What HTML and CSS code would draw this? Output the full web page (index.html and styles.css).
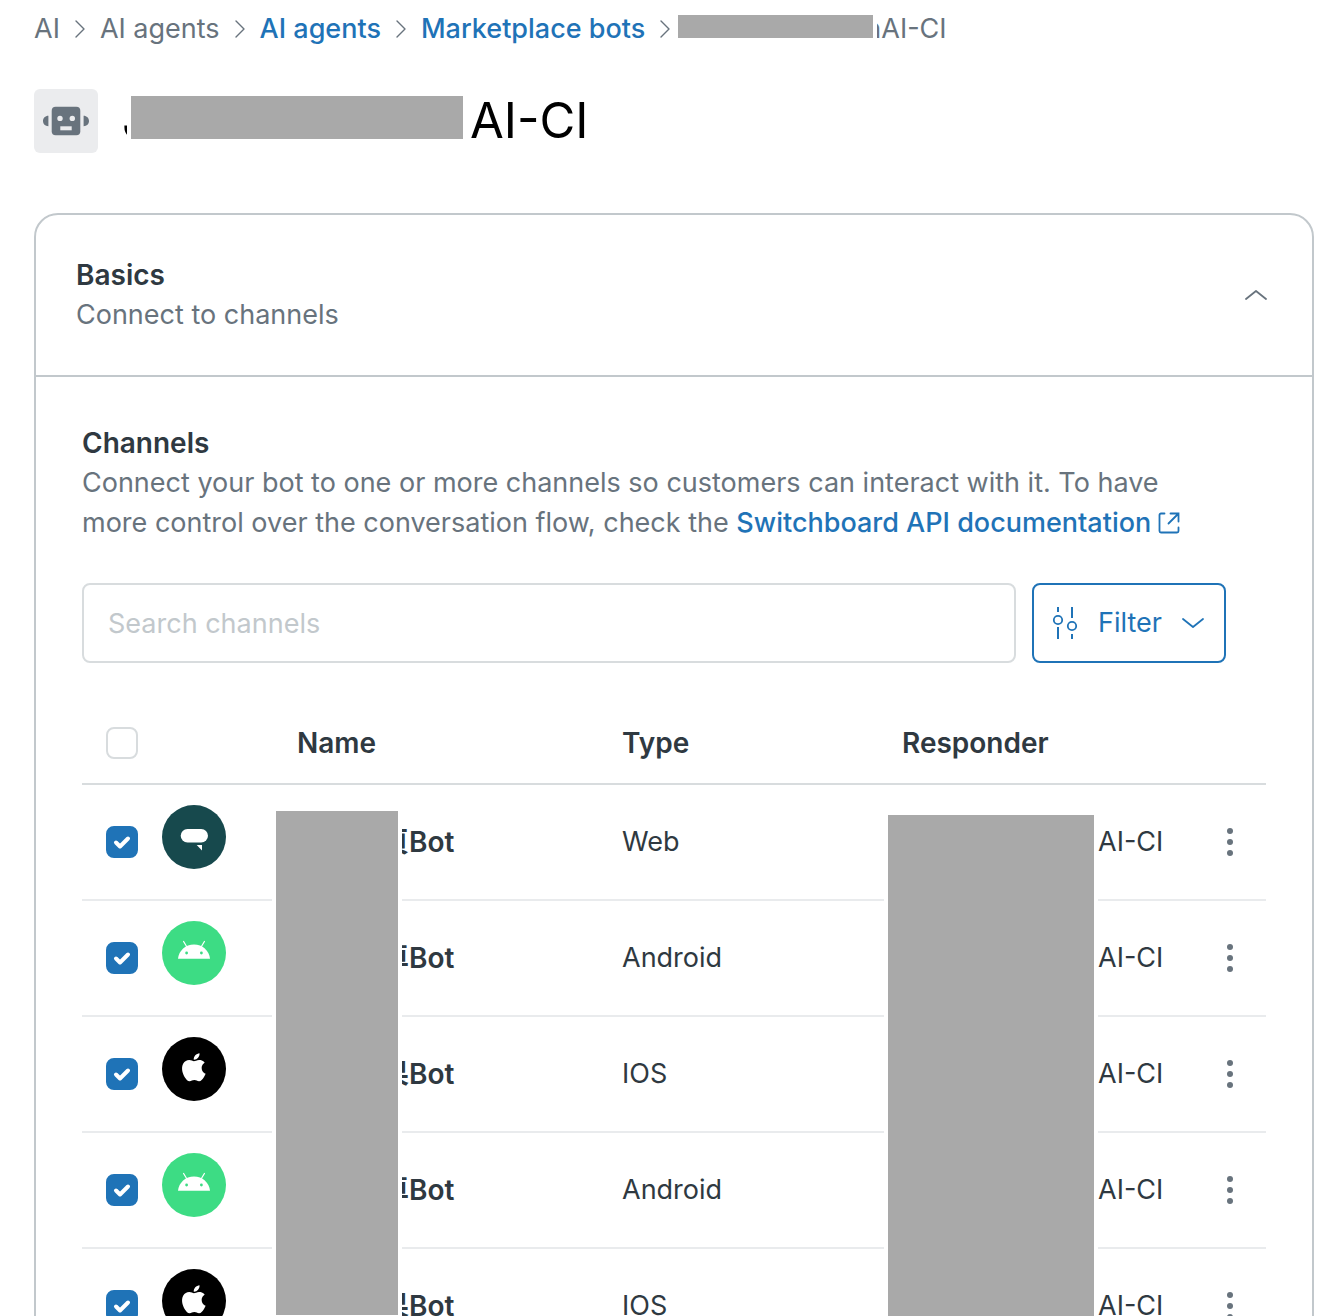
FILE: index.html
```html
<!DOCTYPE html>
<html lang="en">
<head>
  <meta charset="UTF-8" />
  <meta name="viewport" content="width=device-width, initial-scale=1.0"/>
  <title>AI-CI</title>
  <link rel="stylesheet" href="styles.css">
</head>
<body>

  <!-- Shared icons -->
  <svg class="sprite" aria-hidden="true">
    <symbol id="chevron" viewBox="0 0 10 18">
      <path d="M1 1l8 8-8 8" fill="none" stroke="currentColor" stroke-width="1.4" stroke-linecap="round" stroke-linejoin="round"/>
    </symbol>
    <symbol id="web" viewBox="0 0 64 64">
      <circle cx="32" cy="32" r="32" fill="#17494d"/>
      <rect x="18.7" y="24" width="27.3" height="13.6" rx="6.8" fill="#fff"/>
      <path d="M34.7 40H40v5.4z" fill="#fff"/>
    </symbol>
    <symbol id="android" viewBox="0 0 64 64">
      <circle cx="32" cy="32" r="32" fill="#3ddc84"/>
      <path d="M16 37.8c.8-8.2 7.6-14.3 16-14.3s15.2 6.1 16 14.3z" fill="#fff"/>
      <path d="M21.6 20.5l3 5M42.4 20.5l-3 5" stroke="#fff" stroke-width="1.2" stroke-linecap="round"/>
      <circle cx="24.6" cy="32" r="1.4" fill="#3ddc84"/>
      <circle cx="39.4" cy="32" r="1.4" fill="#3ddc84"/>
    </symbol>
    <symbol id="apple" viewBox="0 0 64 64">
      <circle cx="32" cy="32" r="32" fill="#000"/>
      <path transform="translate(17.4 16.2) scale(1.2 1.17)" fill="#fff" d="M12.152 6.896c-.948 0-2.415-1.078-3.96-1.04-2.04.027-3.91 1.183-4.961 3.014-2.117 3.675-.546 9.103 1.519 12.09 1.013 1.454 2.208 3.09 3.792 3.039 1.52-.065 2.09-.987 3.935-.987 1.831 0 2.35.987 3.96.948 1.637-.026 2.676-1.48 3.676-2.948 1.156-1.688 1.636-3.325 1.662-3.415-.039-.013-3.182-1.221-3.22-4.857-.026-3.04 2.48-4.494 2.597-4.559-1.429-2.09-3.623-2.324-4.39-2.376-2-.156-3.675 1.09-4.61 1.09zM15.53 3.83c.843-1.012 1.4-2.427 1.245-3.83-1.207.052-2.662.805-3.532 1.818-.78.896-1.454 2.338-1.273 3.714 1.338.104 2.715-.688 3.559-1.701"/>
    </symbol>
    <symbol id="dots" viewBox="0 0 6 28">
      <circle cx="3" cy="3" r="3"/>
      <circle cx="3" cy="14" r="3"/>
      <circle cx="3" cy="25" r="3"/>
    </symbol>
  </svg>

  <div class="page">
    <nav aria-label="Breadcrumb">
      <ol class="breadcrumb">
        <li>AI</li>
        <li><svg class="crumb-arrow"><use href="#chevron"/></svg>AI agents</li>
        <li><svg class="crumb-arrow"><use href="#chevron"/></svg><a href="#">AI agents</a></li>
        <li><svg class="crumb-arrow"><use href="#chevron"/></svg><a href="#">Marketplace bots</a></li>
        <li class="current"><svg class="crumb-arrow"><use href="#chevron"/></svg><span class="current-name">nAI-CI</span><span class="mask mask-crumb"></span></li>
      </ol>
    </nav>

    <header class="title-bar">
      <div class="bot-icon">
        <svg viewBox="0 0 64 64">
          <path d="M14.4 26.8v10.4c-3.2 0-5.4-2.3-5.4-5.2s2.2-5.2 5.4-5.2zM49.6 26.8v10.4c3.2 0 5.4-2.3 5.4-5.2s-2.2-5.2-5.4-5.2z" fill="#68737d"/>
          <rect x="17.7" y="17.7" width="28.6" height="28.6" rx="4" fill="#68737d"/>
          <circle cx="26" cy="29.4" r="2.7" fill="#ebecee"/>
          <circle cx="38.3" cy="29.4" r="2.7" fill="#ebecee"/>
          <rect x="26.3" y="37.3" width="11.4" height="4" fill="#ebecee"/>
        </svg>
      </div>
      <h1><span>J</span><span class="title-end">AI-CI</span><span class="mask mask-title"></span></h1>
    </header>

    <section class="card">
      <div class="card-header">
        <div>
          <h2>Basics</h2>
          <p>Connect to channels</p>
        </div>
        <button class="collapse" type="button" aria-label="Collapse">
          <svg viewBox="0 0 22 10"><path d="M1 9l10-8 10 8" fill="none" stroke="currentColor" stroke-width="1.8" stroke-linecap="round" stroke-linejoin="round"/></svg>
        </button>
      </div>

      <div class="card-body">
        <h3>Channels</h3>
        <p class="intro">Connect your bot to one or more channels so customers can interact with it. To have more control over the conversation flow, check the <a href="#">Switchboard API documentation <svg class="external" viewBox="0 0 22 22"><path d="M6.500 1.500H3A1.500 1.500 0 0 0 1.500 3v16A1.500 1.500 0 0 0 3 20.500h16a1.500 1.500 0 0 0 1.500-1.500v-3.500M12.500 1.500h8v8M20 2l-9.500 9.500" fill="none" stroke="currentColor" stroke-width="1.8" stroke-linecap="round"/></svg></a></p>

        <div class="toolbar">
          <input class="search" type="text" placeholder="Search channels" aria-label="Search channels" />
          <button class="filter" type="button">
            <svg class="filter-icon" viewBox="0 0 26 32"><path d="M6 0v5M6 20v12M20 0v11M20 27v5" stroke="currentColor" stroke-width="2"/><circle cx="6" cy="13" r="4.2" fill="none" stroke="currentColor" stroke-width="1.8"/><circle cx="20" cy="19" r="4.2" fill="none" stroke="currentColor" stroke-width="1.8"/></svg>
            <span>Filter</span>
            <svg class="filter-arrow" viewBox="0 0 22 10"><path d="M1 1l10 8 10-8" fill="none" stroke="currentColor" stroke-width="1.8" stroke-linecap="round" stroke-linejoin="round"/></svg>
          </button>
        </div>

        <table class="channels">
          <colgroup>
            <col class="col-check">
            <col class="col-icon">
            <col class="col-name">
            <col class="col-type">
            <col>
            <col class="col-menu">
          </colgroup>
          <thead>
            <tr>
              <th><input type="checkbox" aria-label="Select all channels"></th>
              <th></th>
              <th>Name</th>
              <th>Type</th>
              <th>Responder</th>
              <th></th>
            </tr>
          </thead>
          <tbody>
            <tr>
              <td><input type="checkbox" aria-label="Web channel" checked></td>
              <td class="icon"><svg><use href="#web"/></svg></td>
              <td class="name masked">頁Bot<span class="mask mask-names"></span></td>
              <td>Web</td>
              <td class="responder masked">AI-CI<span class="mask mask-responders"></span></td>
              <td class="menu"><button type="button" aria-label="Channel menu"><svg><use href="#dots"/></svg></button></td>
            </tr>
            <tr>
              <td><input type="checkbox" aria-label="Android channel" checked></td>
              <td class="icon"><svg><use href="#android"/></svg></td>
              <td class="name">卓Bot</td>
              <td>Android</td>
              <td class="responder">AI-CI</td>
              <td class="menu"><button type="button" aria-label="Channel menu"><svg><use href="#dots"/></svg></button></td>
            </tr>
            <tr>
              <td><input type="checkbox" aria-label="IOS channel" checked></td>
              <td class="icon"><svg><use href="#apple"/></svg></td>
              <td class="name">果Bot</td>
              <td>IOS</td>
              <td class="responder">AI-CI</td>
              <td class="menu"><button type="button" aria-label="Channel menu"><svg><use href="#dots"/></svg></button></td>
            </tr>
            <tr>
              <td><input type="checkbox" aria-label="Android channel" checked></td>
              <td class="icon"><svg><use href="#android"/></svg></td>
              <td class="name">卓Bot</td>
              <td>Android</td>
              <td class="responder">AI-CI</td>
              <td class="menu"><button type="button" aria-label="Channel menu"><svg><use href="#dots"/></svg></button></td>
            </tr>
            <tr>
              <td><input type="checkbox" aria-label="IOS channel" checked></td>
              <td class="icon"><svg><use href="#apple"/></svg></td>
              <td class="name">果Bot</td>
              <td>IOS</td>
              <td class="responder">AI-CI</td>
              <td class="menu"><button type="button" aria-label="Channel menu"><svg><use href="#dots"/></svg></button></td>
            </tr>
          </tbody>
        </table>
      </div>
    </section>
  </div>

</body>
</html>
```
FILE: styles.css
```css
* {
  box-sizing: border-box;
}

body {
  margin: 0;
  font-family: Inter, "Noto Sans CJK TC", sans-serif;
  font-size: 27px;
  line-height: 40px;
  color: #2f3941;
  background: #fff;
}

h1, h2, h3, p {
  margin: 0;
}

h2, h3 {
  font-size: 28px;
  font-weight: 600;
}

a {
  color: #1f73b7;
  font-weight: 500;
  text-decoration: none;
}

button {
  font: inherit;
  padding: 0;
  border: none;
  background: none;
  cursor: pointer;
}

.sprite {
  display: none;
}

.page {
  height: 100vh;
  overflow: hidden;
  padding: 9px 8px 0 34px;
}

/* Grey blocks over customer names */
.mask {
  position: absolute;
  background: #a9a9a9;
  box-shadow: 0 0 0 4px #fff;
}

.breadcrumb {
  display: flex;
  gap: 15px;
  margin: 0;
  padding: 0;
  list-style: none;
  color: #68737d;
  white-space: nowrap;
}

.breadcrumb li {
  display: flex;
  align-items: center;
  gap: 15px;
}

.crumb-arrow {
  width: 10px;
  height: 18px;
  color: #68737d;
}

.current {
  position: relative;
}

.current-name {
  padding-left: 180px;
}

.mask-crumb {
  left: 18px;
  top: 6px;
  width: 195px;
  height: 23px;
}

.title-bar {
  display: flex;
  align-items: center;
  gap: 24px;
  margin: 40px 0 60px;
}

.bot-icon {
  width: 64px;
  height: 64px;
  border-radius: 6px;
  background: #ebecee;
}

.bot-icon svg {
  display: block;
}

h1 {
  position: relative;
  display: flex;
  font-size: 49px;
  font-weight: 400;
  line-height: 64px;
  color: #000;
}

.title-end {
  padding-left: 320px;
}

.mask-title {
  left: 9px;
  top: 7px;
  width: 332px;
  height: 43px;
}

.card {
  border: 2px solid #c2c8cc;
  border-radius: 24px;
}

.card-header {
  display: flex;
  justify-content: space-between;
  align-items: center;
  padding: 40px;
  border-bottom: 2px solid #c2c8cc;
}

.card-header p,
.intro {
  color: #68737d;
}

.collapse {
  width: 32px;
  height: 32px;
  display: flex;
  align-items: center;
  justify-content: center;
  color: #68737d;
}

.collapse svg,
.filter-arrow {
  width: 22px;
  height: 10px;
}

.card-body {
  padding: 46px;
}

.intro {
  margin-right: 40px;
}

.external {
  width: 22px;
  height: 22px;
  vertical-align: -2px;
}

.toolbar {
  display: flex;
  gap: 16px;
  margin: 40px 40px 40px 0;
}

.search {
  flex: 1;
  min-width: 0;
  height: 80px;
  padding: 0 24px;
  border: 2px solid #d8dcde;
  border-radius: 8px;
  font: inherit;
  color: #2f3941;
}

.search::placeholder {
  color: #c2c8cc;
  opacity: 1;
}

.filter {
  display: flex;
  align-items: center;
  gap: 20px;
  width: 194px;
  height: 80px;
  padding: 0 18px;
  border: 2px solid #1f73b7;
  border-radius: 8px;
  color: #1f73b7;
}

.filter-icon {
  width: 26px;
  height: 32px;
}

.channels {
  width: 100%;
  table-layout: fixed;
  border-collapse: separate;
  border-spacing: 0;
}

.col-check {
  width: 56px;
}

.col-icon {
  width: 135px;
}

.col-name {
  width: 325px;
}

.col-type {
  width: 280px;
}

.col-menu {
  width: 72px;
}

.channels th,
.channels td {
  padding: 0 0 0 24px;
  text-align: left;
  vertical-align: middle;
}

.channels th {
  height: 82px;
  border-bottom: 2px solid #d8dcde;
  font-size: 28px;
  font-weight: 600;
}

.channels td {
  height: 116px;
  border-bottom: 2px solid #e9ebed;
}

.channels input {
  appearance: none;
  display: block;
  width: 32px;
  height: 32px;
  margin: 0;
  border: 2px solid #d8dcde;
  border-radius: 8px;
}

.channels input:checked {
  border-color: #1f73b7;
  background: #1f73b7 url("data:image/svg+xml,%3Csvg xmlns='http://www.w3.org/2000/svg' viewBox='0 0 28 28'%3E%3Cpath d='M8 14.5l4 4 8-8' fill='none' stroke='white' stroke-width='4' stroke-linecap='round' stroke-linejoin='round'/%3E%3C/svg%3E") center / 28px 28px;
}

.channels td.icon {
  padding-top: 20px;
  vertical-align: top;
}

.icon svg {
  display: block;
  width: 64px;
  height: 64px;
}

.channels td.name {
  padding-left: 108px;
  font-size: 28px;
  font-weight: 600;
}

.channels td.responder {
  padding-left: 220px;
}

.masked {
  position: relative;
}

.mask-names {
  left: 3px;
  top: 26px;
  width: 122px;
  height: 504px;
}

.mask-responders {
  left: 10px;
  top: 30px;
  width: 206px;
  height: 530px;
}

.channels td.menu {
  padding: 0;
}

.menu button {
  display: flex;
  align-items: center;
  justify-content: center;
  width: 40px;
  height: 40px;
  margin: 0 auto;
}

.menu svg {
  width: 6px;
  height: 28px;
  fill: #68737d;
}
```
